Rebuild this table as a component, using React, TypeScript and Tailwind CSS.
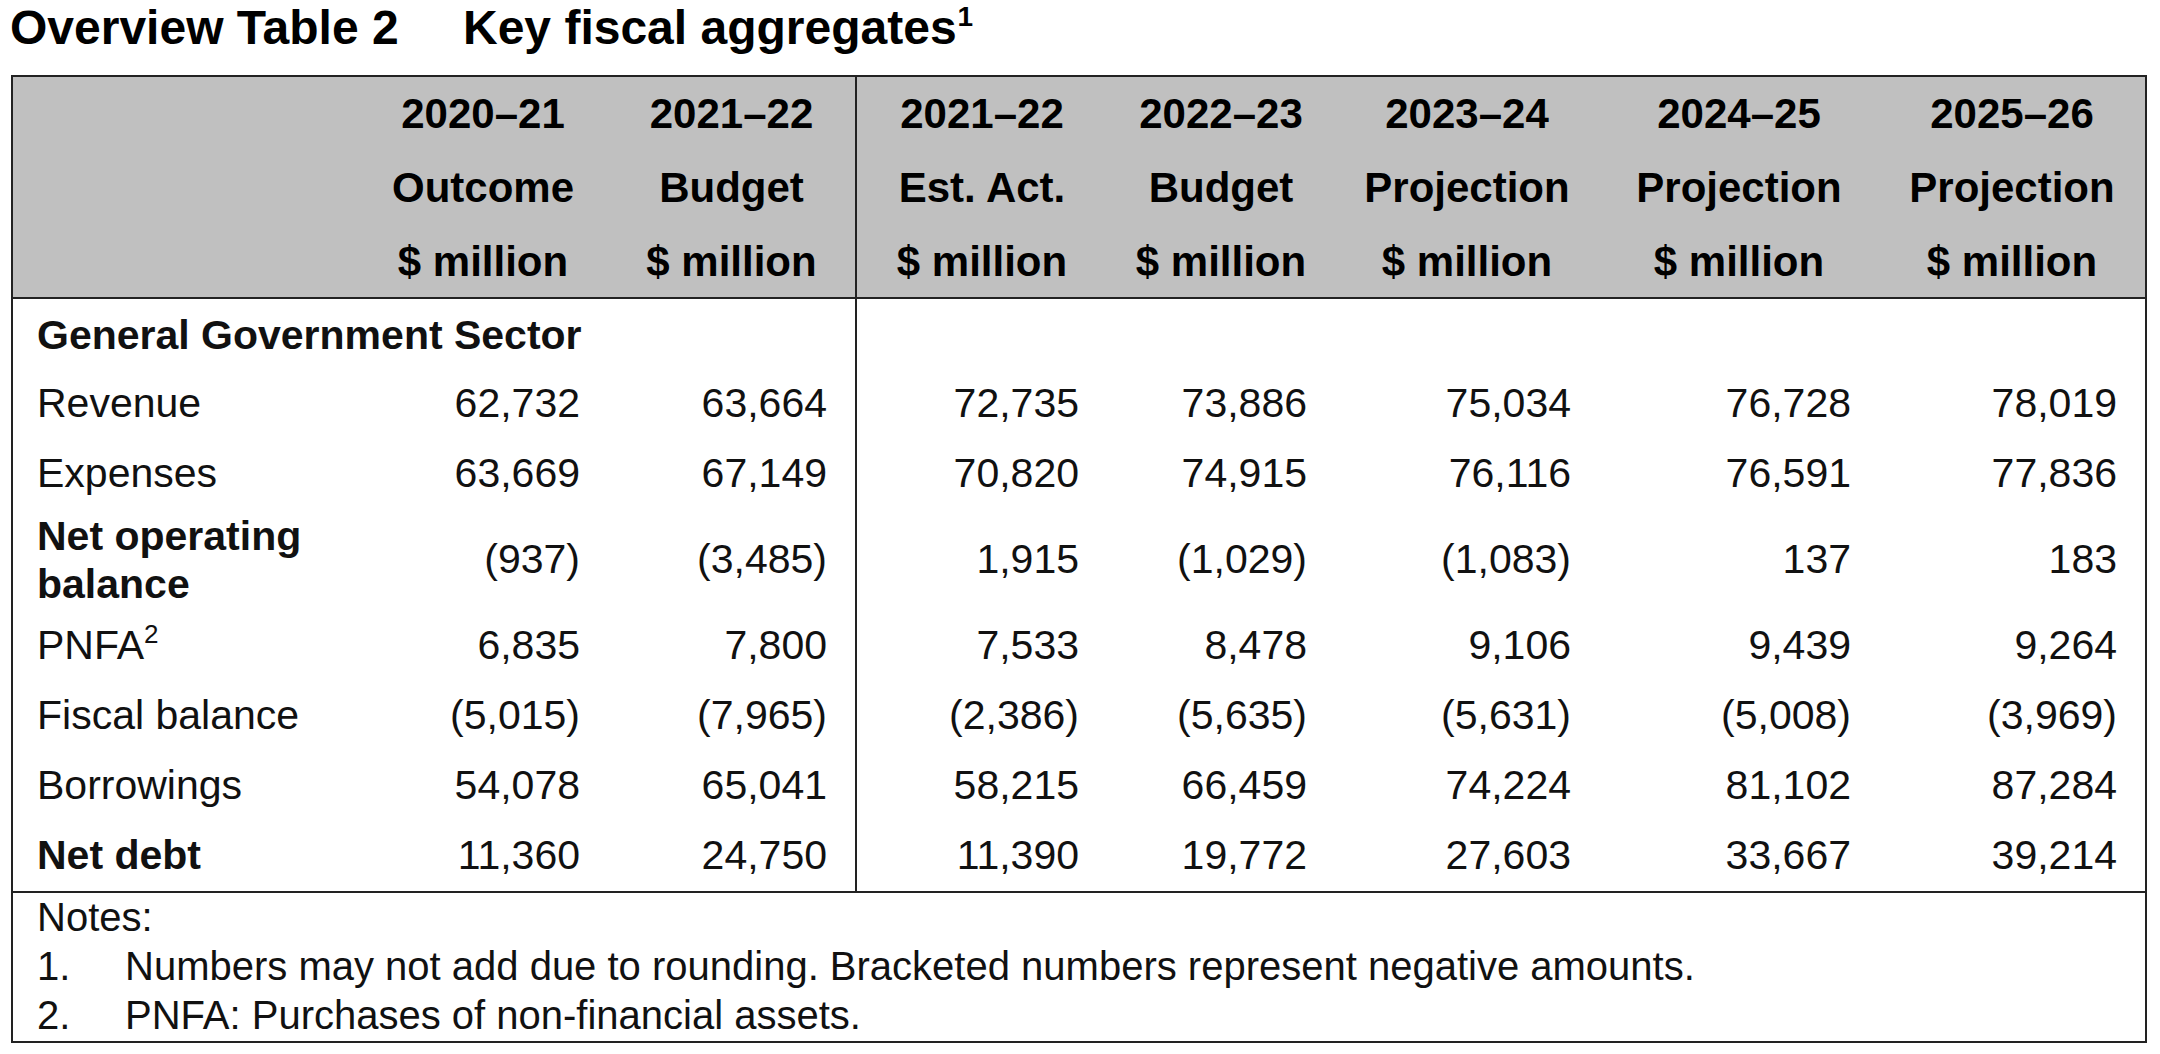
import React from "react";

const GRID =
  "grid grid-cols-[345px_250px_247px_252px_228px_264px_280px_266px]";

const headers: [string, string][] = [
  ["2020–21", "Outcome"],
  ["2021–22", "Budget"],
  ["2021–22", "Est. Act."],
  ["2022–23", "Budget"],
  ["2023–24", "Projection"],
  ["2024–25", "Projection"],
  ["2025–26", "Projection"],
];

type Row = {
  label: React.ReactNode;
  bold?: boolean;
  tall?: boolean;
  values: string[];
};

const rows: Row[] = [
  {
    label: "Revenue",
    values: ["62,732", "63,664", "72,735", "73,886", "75,034", "76,728", "78,019"],
  },
  {
    label: "Expenses",
    values: ["63,669", "67,149", "70,820", "74,915", "76,116", "76,591", "77,836"],
  },
  {
    label: (
      <>
        Net operating
        <br />
        balance
      </>
    ),
    bold: true,
    tall: true,
    values: ["(937)", "(3,485)", "1,915", "(1,029)", "(1,083)", "137", "183"],
  },
  {
    label: (
      <>
        PNFA
        <sup className="text-[26px] relative -top-[2px] align-super leading-none">2</sup>
      </>
    ),
    values: ["6,835", "7,800", "7,533", "8,478", "9,106", "9,439", "9,264"],
  },
  {
    label: "Fiscal balance",
    values: ["(5,015)", "(7,965)", "(2,386)", "(5,635)", "(5,631)", "(5,008)", "(3,969)"],
  },
  {
    label: "Borrowings",
    values: ["54,078", "65,041", "58,215", "66,459", "74,224", "81,102", "87,284"],
  },
  {
    label: "Net debt",
    bold: true,
    values: ["11,360", "24,750", "11,390", "19,772", "27,603", "33,667", "39,214"],
  },
];

export default function App() {
  return (
    <div
      className="bg-white w-[2160px] h-[1054px] pl-[11px] pt-[2px] text-[#111]"
      style={{ fontFamily: '"Liberation Sans", Arial, sans-serif' }}
    >
      {/* Title */}
      <div className="flex h-[52px] leading-[52px] text-[48px] font-bold text-black -ml-[1px] mb-[21px]">
        <span className="w-[453px]">Overview Table 2</span>
        <span>
          Key fiscal aggregates
          <span className="text-[28px] relative -top-[18px] ml-[1px]">1</span>
        </span>
      </div>

      {/* Table */}
      <div className="w-[2136px] border-2 border-[#222]">
        {/* Header */}
        <div className={`${GRID} bg-[#c0c0c0] border-b-2 border-[#222] h-[222px]`}>
          <div />
          {headers.map(([yr, kind], i) => (
            <div
              key={i}
              className={`flex flex-col items-center text-center font-bold text-black text-[42px] leading-[74px] ${
                i === 2 ? "border-l-2 border-[#222]" : ""
              }`}
            >
              <span>{yr}</span>
              <span>{kind}</span>
              <span>$ million</span>
            </div>
          ))}
        </div>

        {/* Body */}
        <div className="text-[41px]">
          <div className={`${GRID} h-[70px]`}>
            <div className="col-span-3 flex items-center pl-[24px] pt-[3px] font-bold whitespace-nowrap">
              General Government Sector
            </div>
            <div className="border-l-2 border-[#222]" />
            <div />
            <div />
            <div />
            <div />
          </div>
          {rows.map((r, ri) => (
            <div key={ri} className={`${GRID} ${r.tall ? "h-[102px]" : "h-[70px]"}`}>
              <div
                className={`flex items-center pl-[24px] ${
                  r.bold ? "font-bold" : ""
                } ${r.tall ? "leading-[48px]" : ""}`}
              >
                <span>{r.label}</span>
              </div>
              {r.values.map((v, vi) => (
                <div
                  key={vi}
                  className={`flex items-center justify-end pr-[28px] ${
                    vi === 2 ? "border-l-2 border-[#222]" : ""
                  }`}
                >
                  {v}
                </div>
              ))}
            </div>
          ))}
        </div>

        {/* Notes */}
        <div className="border-t-2 border-[#222] pl-[24px] pb-[1px] text-[40px] leading-[49px]">
          <div>Notes:</div>
          <div className="flex">
            <span className="w-[88px] shrink-0">1.</span>
            <span>
              Numbers may not add due to rounding. Bracketed numbers represent negative amounts.
            </span>
          </div>
          <div className="flex">
            <span className="w-[88px] shrink-0">2.</span>
            <span>PNFA: Purchases of non-financial assets.</span>
          </div>
        </div>
      </div>
    </div>
  );
}
